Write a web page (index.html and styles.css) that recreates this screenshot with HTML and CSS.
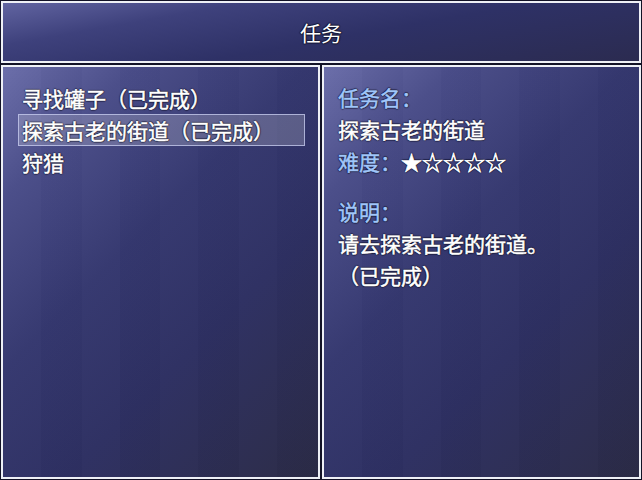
FILE: index.html
```html
<!DOCTYPE html>
<html lang="zh-CN">
<head>
<meta charset="utf-8">
<title>任务</title>
<link rel="stylesheet" href="styles.css">
</head>
<body>
<div class="screen">
  <div class="window title-window">
    <div class="title">任务</div>
  </div>
  <div class="panes">
    <div class="window list-window">
      <ul class="quest-list">
        <li class="item">寻找罐子（已完成）</li>
        <li class="item selected">探索古老的街道（已完成）</li>
        <li class="item">狩猎</li>
      </ul>
    </div>
    <div class="window detail-window">
      <div class="line label">任务名：</div>
      <div class="line">探索古老的街道</div>
      <div class="line"><span class="label">难度：</span><span class="stars">★☆☆☆☆</span></div>
      <div class="line label gap">说明：</div>
      <div class="line">请去探索古老的街道。</div>
      <div class="line">（已完成）</div>
    </div>
  </div>
</div>
</body>
</html>
```

FILE: styles.css
```css
html, body {
  margin: 0;
  padding: 0;
  background: #1b1b2c;
}
body {
  width: 642px;
  height: 480px;
  overflow: hidden;
  font-family: "Noto Sans CJK SC", "Noto Sans", sans-serif;
  font-size: 21px;
  font-weight: 400;
  color: #ffffff;
}
.screen {
  box-sizing: border-box;
  width: 642px;
  height: 480px;
  padding: 1px;
  display: grid;
  grid-template-rows: 62px 1fr;
  gap: 2px;
  background: #15152a;
}
.window {
  box-sizing: border-box;
  min-width: 0;
  border: 2px solid #eef0f6;
  box-shadow: 0 0 0 1px #121226;
  background:
    linear-gradient(90deg, rgba(255,255,255,0.012) 0 12%, rgba(0,0,0,0.012) 12% 25%, rgba(255,255,255,0.012) 25% 37%, rgba(0,0,0,0.012) 37% 50%, rgba(255,255,255,0.012) 50% 62%, rgba(0,0,0,0.012) 62% 75%, rgba(255,255,255,0.012) 75% 87%, rgba(0,0,0,0.012) 87%),
    linear-gradient(135deg, #6a6da9 0%, #4a4d89 18%, #35386f 42%, #2e3062 65%, #2b2b46 100%);
  text-shadow: 1px 0 1px rgba(15,15,35,0.7), -1px 0 1px rgba(15,15,35,0.7), 0 1px 1px rgba(15,15,35,0.7), 0 -1px 1px rgba(15,15,35,0.7);
}
.title-window {
  display: flex;
  align-items: center;
  justify-content: center;
  background: linear-gradient(170deg, #6164a1 0%, #3e417c 25%, #2e3166 55%, #2b2b50 100%);
}
.title {
  line-height: 1;
  padding-top: 1px;
}
.panes {
  display: grid;
  grid-template-columns: 1fr 1fr;
  gap: 2px;
}
.quest-list {
  list-style: none;
  margin: 0;
  padding: 15px 13px 0 15px;
  -webkit-text-stroke: 0.5px currentColor;
}
.item {
  box-sizing: border-box;
  height: 32px;
  line-height: 30px;
  padding-left: 3px;
  border: 1px solid transparent;
  white-space: nowrap;
}
.item.selected {
  border-color: rgba(200,205,240,0.75);
  background: rgba(255,255,255,0.2);
}
.detail-window {
  padding: 15px 10px 0 14px;
  -webkit-text-stroke: 0.5px currentColor;
}
.line {
  height: 32px;
  line-height: 30px;
  white-space: nowrap;
}
.label {
  color: #a0c6fa;
}
.gap {
  margin-top: 18px;
}
.stars {
  color: #ffffff;
  -webkit-text-stroke: 0.6px currentColor;
}
```
